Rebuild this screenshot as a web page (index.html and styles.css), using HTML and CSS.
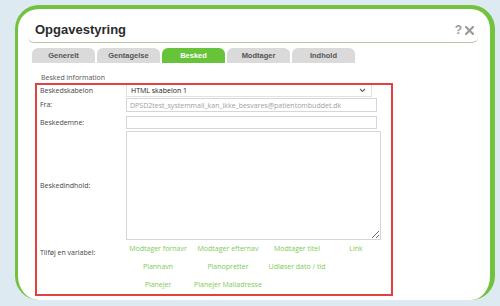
FILE: index.html
```html
<!DOCTYPE html>
<html lang="da">
<head>
  <meta charset="UTF-8" />
  <title>Opgavestyring</title>
  <link rel="stylesheet" href="styles.css">
</head>
<body>
  <div class="dialog">
    <div class="dialog-header">
      <h1>Opgavestyring</h1>
      <div class="dialog-tools">
        <span class="help">?</span>
        <svg class="close" width="9" height="9" viewBox="0 0 9 9">
          <path d="M1 1 L8 8 M8 1 L1 8" stroke="#9b9b9b" stroke-width="2.2" stroke-linecap="square" fill="none"/>
        </svg>
      </div>
    </div>

    <div class="tabs">
      <div class="tab">Generelt</div>
      <div class="tab">Gentagelse</div>
      <div class="tab active">Besked</div>
      <div class="tab">Modtager</div>
      <div class="tab">Indhold</div>
    </div>

    <p class="section-title">Besked information</p>

    <div class="message-box">
      <div class="row row-template">
        <label>Beskedskabelon</label>
        <div class="select">
          <span>HTML skabelon 1</span>
          <svg width="7" height="5" viewBox="0 0 7 5">
            <path d="M1 1 L3.5 3.5 L6 1" stroke="#666" stroke-width="1.2" fill="none"/>
          </svg>
        </div>
      </div>
      <div class="row row-from">
        <label>Fra:</label>
        <input class="field field-from" type="text" value="DPSD2test_systemmail_kan_ikke_besvares@patientombuddet.dk" readonly>
      </div>
      <div class="row row-subject">
        <label>Beskedemne:</label>
        <input class="field field-subject" type="text">
      </div>
      <div class="row row-body">
        <label>Beskedindhold:</label>
        <textarea class="field field-body"></textarea>
      </div>
      <div class="row row-vars">
        <label>Tilføj en variabel:</label>
        <div class="vars">
          <a>Modtager fornavr</a>
          <a>Modtager efternav</a>
          <a>Modtager titel</a>
          <a>Link</a>
          <a>Plannavn</a>
          <a>Planopretter</a>
          <a>Udløser dato / tid</a>
          <span></span>
          <a>Planejer</a>
          <a>Planejer Mailadresse</a>
        </div>
      </div>
    </div>
  </div>
</body>
</html>
```

FILE: styles.css
```css
* {
  box-sizing: border-box;
  margin: 0;
  padding: 0;
}

body {
  background: #deeaf2;
  padding: 5px 5px 0 15px;
  font-family: 'Open Sans', sans-serif;
  color: #444;
}

.dialog {
  height: 295px;
  background: #fff;
  border: solid #72c23e;
  border-width: 4px 5px 0 3px;
  border-radius: 24px;
}

.dialog-header {
  height: 34px;
  margin: 0 12px 0 10px;
  padding: 0 4px 4px 7px;
  display: flex;
  align-items: flex-end;
  justify-content: space-between;
  border-bottom: 1px solid #b3c9a5;
  border-radius: 0 0 6px 6px;
}

h1 {
  font-family: 'Liberation Sans', Arial, sans-serif;
  font-size: 13px;
  line-height: 16px;
  font-weight: bold;
  color: #2b2b2b;
}

.dialog-tools {
  display: flex;
  align-items: center;
  gap: 3px;
  margin-bottom: 2px;
}

.help {
  font-family: 'Liberation Sans', Arial, sans-serif;
  font-size: 12px;
  line-height: 12px;
  font-weight: bold;
  color: #9b9b9b;
}

.tabs {
  display: flex;
  gap: 2px;
  margin: 5px 0 0 14px;
}

.tab {
  width: 63px;
  height: 15px;
  background: #dadada;
  border-radius: 6px 6px 0 0;
  font-family: 'Liberation Sans', Arial, sans-serif;
  font-size: 7.5px;
  font-weight: bold;
  line-height: 15px;
  text-align: center;
  color: #555;
}

.tab.active {
  background: #67c33a;
  color: #fff;
}

.section-title {
  margin: 10px 0 0 23px;
  font-size: 7px;
  line-height: 10px;
  color: #555;
}

.message-box {
  width: 358px;
  margin-left: 17px;
  border: 2px solid #e2413f;
  font-size: 7px;
}

.row {
  display: flex;
  align-items: center;
}

.row label {
  width: 89px;
  flex: none;
  padding-left: 3px;
  line-height: 10px;
}

.row-from { margin-top: 1px; }
.row-subject { margin-top: 4px; }
.row-body { margin-top: 2px; }

.select {
  width: 246px;
  height: 12px;
  display: flex;
  align-items: center;
  justify-content: space-between;
  padding: 0 5px 0 4px;
  border: 1px solid #e2e2e2;
  border-top: 0;
  color: #222;
}

.field {
  border: 1px solid #d6d6d6;
  font-family: 'Open Sans', sans-serif;
  font-size: 7px;
  outline: none;
  appearance: none;
}

.field-from,
.field-subject {
  width: 251px;
  padding: 0 3px;
  color: #a0a0a0;
}

.field-from { height: 14px; }
.field-subject { height: 13px; }

.field-body {
  width: 255px;
  height: 109px;
  resize: both;
}

.row-vars {
  align-items: flex-start;
}

.row-vars label {
  padding-top: 8px;
}

.vars {
  display: grid;
  grid-template-columns: 64px 76px 62px 56px;
  grid-auto-rows: 18px;
  align-items: center;
  text-align: center;
  white-space: nowrap;
}

.vars a {
  color: #7ccb54;
  line-height: 10px;
}
```
